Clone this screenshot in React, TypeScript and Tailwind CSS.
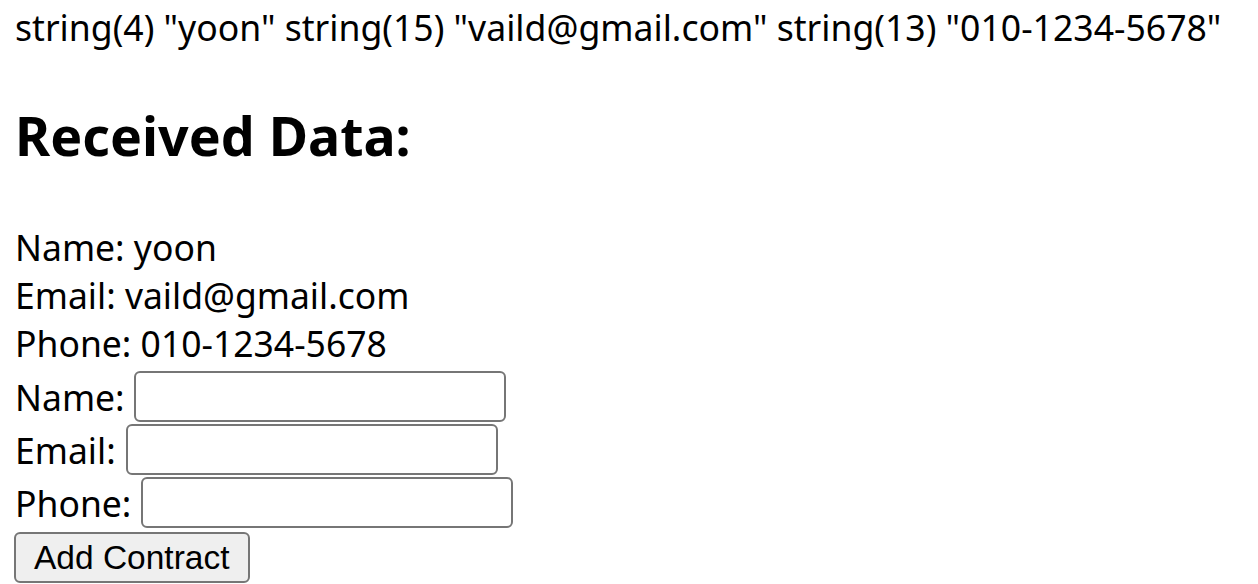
import React, { useState } from 'react';

export default function App() {
  const [name, setName] = useState('');
  const [email, setEmail] = useState('');
  const [phone, setPhone] = useState('');

  const inputCls =
    'h-[51px] w-[372px] rounded-[6px] border-2 border-[#767676] bg-white px-[4px] text-[26px] outline-none';

  return (
    <div className="min-h-screen bg-white px-[14px] text-black [font-family:'Noto_Sans',sans-serif]">
      {/* var_dump output */}
      <div className="pt-[3px] pl-[1px] text-[35.6px] leading-[48px] whitespace-nowrap">
        string(4) "yoon" string(15) "vaild@gmail.com" string(13) "010-1234-5678"
      </div>

      <h2 className="mt-[49px] pl-[1px] text-[53.7px] font-bold leading-[72px]">Received Data:</h2>

      <div className="mt-[51px] pl-[1px] text-[35.5px] leading-[48px]">
        <div>Name: yoon</div>
        <div>Email: vaild@gmail.com</div>
        <div>Phone: 010-1234-5678</div>
      </div>

      {/* form */}
      <form className="mt-[3px] pl-[1px] text-[35.5px] leading-[48px]" onSubmit={(e) => e.preventDefault()}>
        <label className="flex h-[53px] items-center gap-[9px]">
          <span>Name:</span>
          <input className={inputCls} value={name} onChange={(e) => setName(e.target.value)} />
        </label>
        <label className="flex h-[53px] items-center gap-[10px]">
          <span>Email:</span>
          <input className={inputCls} value={email} onChange={(e) => setEmail(e.target.value)} />
        </label>
        <label className="flex h-[53px] items-center gap-[10px]">
          <span>Phone:</span>
          <input className={inputCls} value={phone} onChange={(e) => setPhone(e.target.value)} />
        </label>
        <button
          type="submit"
          className="mt-[3px] -ml-[1px] h-[51px] rounded-[6px] border-2 border-[#767676] bg-[#efefef] px-[18px] text-[33.5px] leading-none [font-family:'Liberation_Sans',Arial,sans-serif]"
        >
          Add Contract
        </button>
      </form>
    </div>
  );
}
